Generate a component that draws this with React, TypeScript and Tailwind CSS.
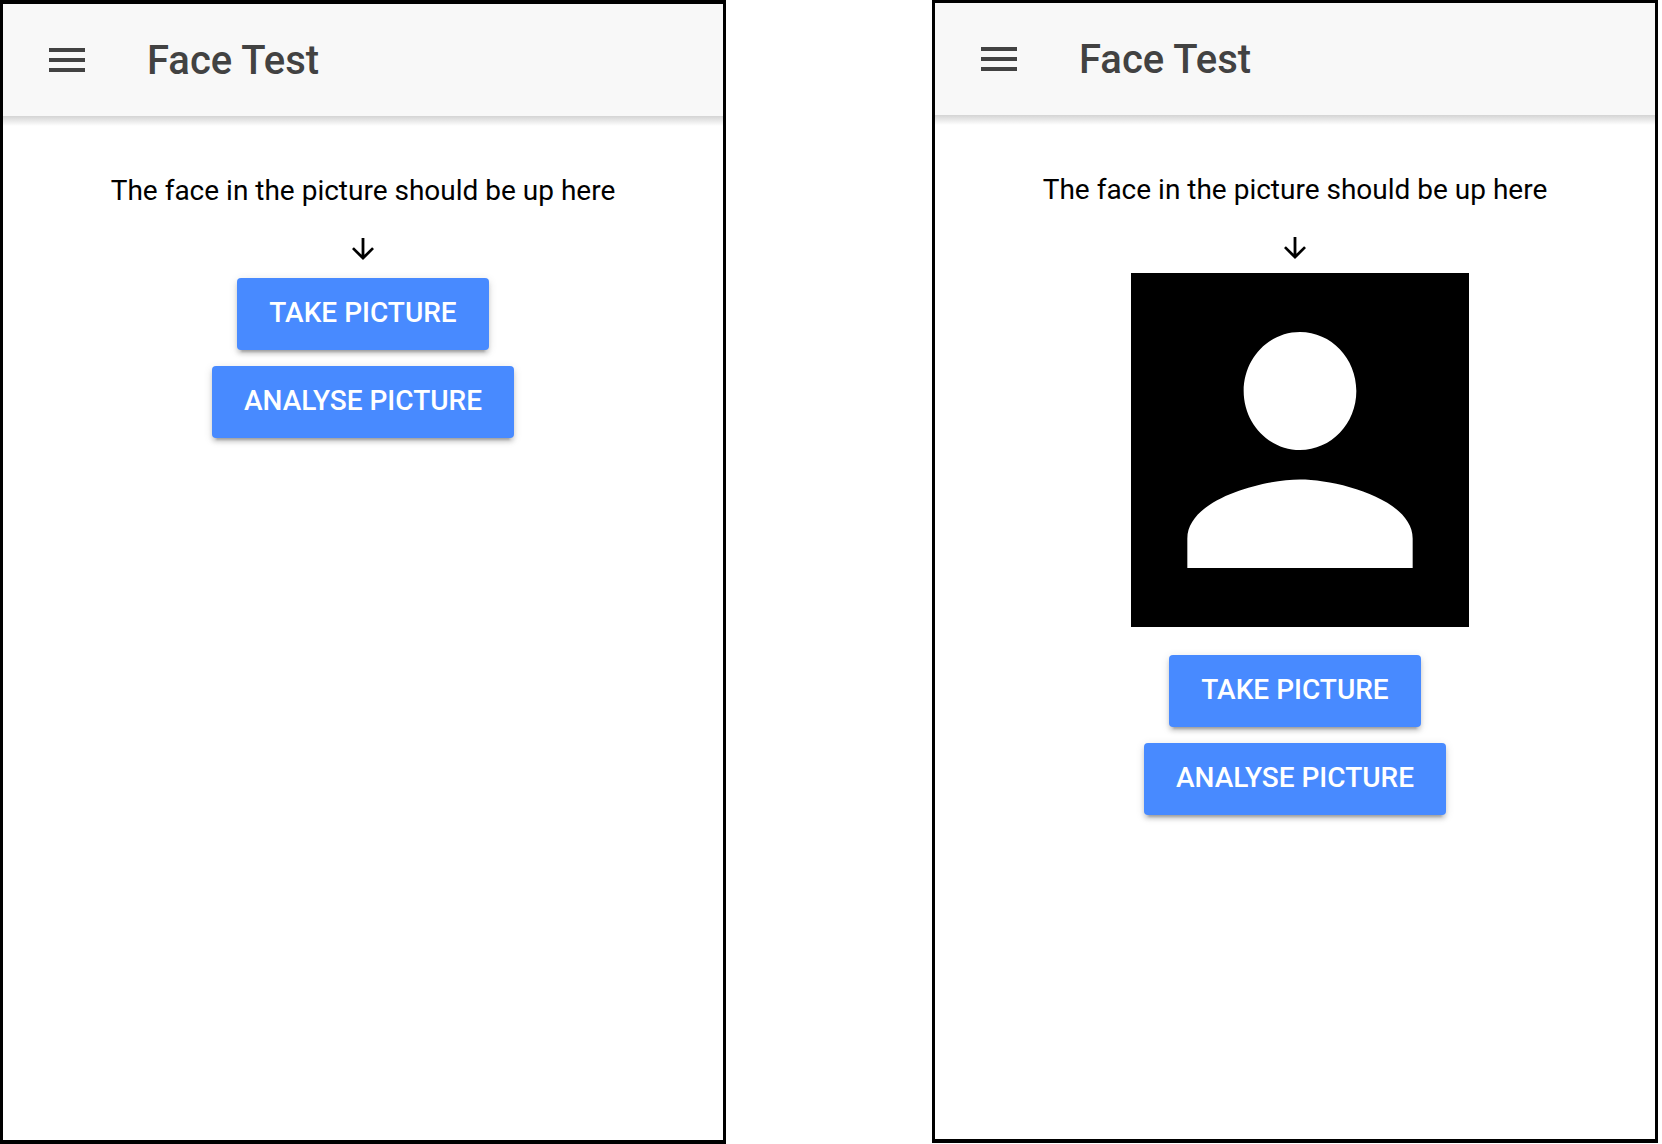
import React from "react";

function PersonPicture() {
  return (
    <svg
      role="img"
      aria-label="Picture"
      viewBox="0 0 24 24"
      preserveAspectRatio="none"
      className="ml-2.5 block h-[354px] w-[338px] bg-black"
    >
      <path
        fill="#fff"
        d="M12 12c2.21 0 4-1.79 4-4s-1.79-4-4-4-4 1.79-4 4 1.79 4 4 4zm0 2c-2.67 0-8 1.34-8 4v2h16v-2c0-2.66-5.33-4-8-4z"
      />
    </svg>
  );
}

function ActionButton({ children }: { children: string }) {
  return (
    <button
      type="button"
      className="h-[72px] rounded-[4px] bg-[#488aff] px-8 pb-0.5 text-[28px] leading-8 font-medium text-white uppercase shadow-[0_4px_4px_rgba(0,0,0,0.14),0_6px_2px_-4px_rgba(0,0,0,0.2),0_2px_10px_rgba(0,0,0,0.12)]"
    >
      {children}
    </button>
  );
}

function Phone({ picture = false, className }: { picture?: boolean; className: string }) {
  return (
    <section className={`min-w-0 flex-1 border-x-[3px] border-black bg-white ${className}`}>
      <header className="relative flex h-28 items-center bg-[#f8f8f8] pl-[46px] text-[#424242]">
        <button type="button" aria-label="Menu" className="flex w-9 flex-col gap-1.5">
          <span className="h-1 w-full bg-current" />
          <span className="h-1 w-full bg-current" />
          <span className="h-1 w-full bg-current" />
        </button>
        <h1 className="ml-[62px] pt-0.5 text-[40px] leading-12 font-medium">Face Test</h1>
        <div className="absolute inset-x-0 top-full h-2.5 bg-linear-to-b from-black/17 to-transparent" />
      </header>
      <main className="flex flex-col items-center pt-[54px]">
        <p className="text-[28px] leading-[42px] text-black">The face in the picture should be up here</p>
        <svg viewBox="0 0 28 28" aria-hidden="true" className="mt-[22px] h-7 w-7">
          <path d="M12.6 4h2.8v16.8l7.7-7.6 1.9 1.9L14 26.1 3 15.1l1.9-1.9 7.7 7.6z" />
        </svg>
        {picture && (
          <div className="mt-3 mb-3">
            <PersonPicture />
          </div>
        )}
        <div className="mt-4 flex flex-col items-center gap-4">
          <ActionButton>Take picture</ActionButton>
          <ActionButton>Analyse picture</ActionButton>
        </div>
      </main>
    </section>
  );
}

export default function App() {
  return (
    <div className="flex min-h-screen gap-[206px] bg-white pr-1 font-[Roboto,sans-serif]">
      <Phone className="border-y-4" />
      <Phone picture className="mb-px border-t-[3px] border-b-4" />
    </div>
  );
}
